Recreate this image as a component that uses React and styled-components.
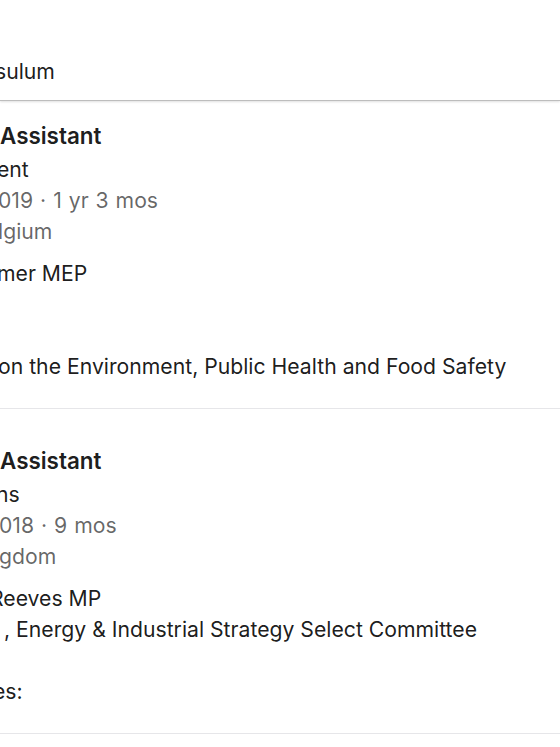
import styled, { createGlobalStyle } from "styled-components";

const GlobalStyle = createGlobalStyle`
  html, body {
    margin: 0;
    padding: 0;
    background: #fff;
  }
  body {
    font-family: Inter, "Noto Sans", "Liberation Sans", sans-serif;
    color: rgba(0, 0, 0, 0.9);
    -webkit-font-smoothing: antialiased;
  }
`;

const Page = styled.div`
  width: 560px;
  height: 747px;
  overflow: hidden;
  background: #fff;
`;

const Header = styled.div`
  position: relative;
  z-index: 1;
  padding: 56px 0 13px;
  border-bottom: 1px solid #bdbdbd;
  box-shadow: 0 1px 2px rgba(0, 0, 0, 0.12);
  background: #fff;
`;

const Entry = styled.section`
  padding: 36px 0 26px;
  border-bottom: 1px solid #e6e6e9;
  &:first-of-type {
    padding-top: 19px;
  }
`;

const Line = styled.div`
  font-size: 21.2px;
  line-height: 31px;
  height: 31px;
  white-space: nowrap;
  margin-left: ${(p) => p.$cut || 0}px;
  word-spacing: ${(p) => (p.$muted ? "1px" : "0")};
  color: ${(p) => (p.$muted ? "rgba(0, 0, 0, 0.6)" : "rgba(0, 0, 0, 0.9)")};
`;

const Title = styled(Line)`
  font-weight: 600;
  font-size: 22.4px;
  margin-bottom: 3px;
`;

const Desc = styled.div`
  margin-top: 11px;
`;

const entries = [
  {
    title: "Assistant",
    company: { text: "ent", cut: -3 },
    date: { text: "019 · 1 yr 3 mos", cut: -2 },
    place: { text: "lgium", cut: -2 },
    desc: [
      { text: "mer MEP", cut: -3 },
      { text: "" },
      { text: "" },
      { text: "on the Environment, Public Health and Food Safety", cut: -2 },
    ],
  },
  {
    title: "Assistant",
    company: { text: "ns", cut: -4 },
    date: { text: "018 · 9 mos", cut: -1 },
    place: { text: "gdom", cut: -1 },
    desc: [
      { text: "Reeves MP", cut: -10 },
      { text: ", Energy & Industrial Strategy Select Committee", cut: 4 },
      { text: "" },
      { text: "es:", cut: -7 },
    ],
  },
];

export default function App() {
  return (
    <>
      <GlobalStyle />
      <Page>
        <Header>
          <Line $cut={-5}>sulum</Line>
        </Header>
        {entries.map((e, i) => (
          <Entry key={i}>
            <Title>{e.title}</Title>
            <Line $cut={e.company.cut}>{e.company.text}</Line>
            <Line $muted $cut={e.date.cut}>{e.date.text}</Line>
            <Line $muted $cut={e.place.cut}>{e.place.text}</Line>
            <Desc>
              {e.desc.map((d, j) => (
                <Line key={j} $cut={d.cut}>{d.text}</Line>
              ))}
            </Desc>
          </Entry>
        ))}
      </Page>
    </>
  );
}
